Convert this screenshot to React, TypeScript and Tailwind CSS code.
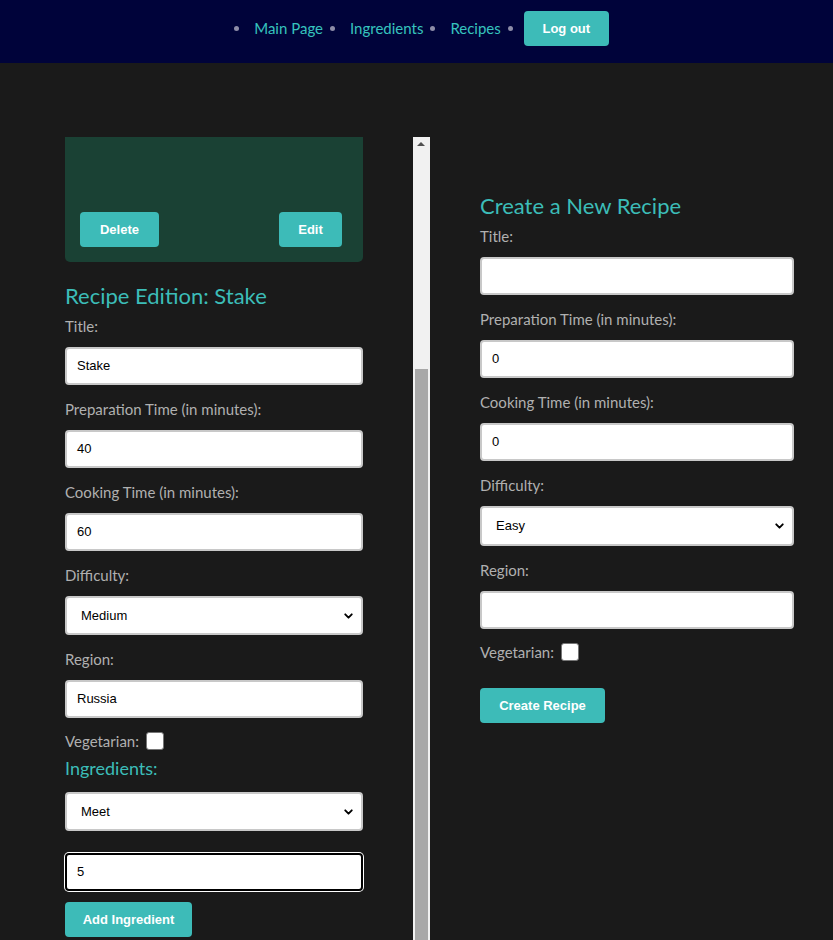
import React from "react";
import { ChevronDown } from "lucide-react";

const ui = { fontFamily: "Lato, 'Noto Sans', sans-serif" };
const arial = { fontFamily: "'Liberation Sans', Arial, sans-serif" };

const Label = ({ children }: { children: React.ReactNode }) => (
  <label className="block text-[15px] leading-[20px] text-[#b0b0b0] mb-[11px]" style={ui}>
    {children}
  </label>
);

const TextInput = ({ value, focused = false, last = false }: { value: string; focused?: boolean; last?: boolean }) => (
  <div
    className={`h-[38px] w-full bg-white rounded-[4px] flex items-center px-[10px] text-[13px] text-black ${
      focused ? "border-2 border-black ring-1 ring-white" : "border-2 border-[#c8c8c8]"
    } ${last ? "" : "mb-[14px]"}`}
    style={arial}
  >
    {value}
  </div>
);

const Select = ({ value, tall = false, last = false }: { value: string; tall?: boolean; last?: boolean }) => (
  <div
    className={`relative w-full bg-white rounded-[4px] border-2 border-[#c8c8c8] flex items-center pl-[14px] text-[13px] text-black ${
      tall ? "h-[40px]" : "h-[39px]"
    } ${last ? "" : "mb-[14px]"}`}
    style={arial}
  >
    {value}
    <ChevronDown className="absolute right-[6px] top-1/2 -translate-y-1/2 w-[13px] h-[13px]" strokeWidth={3.5} />
  </div>
);

const Checkbox = () => (
  <span className="inline-block w-[18px] h-[18px] bg-white rounded-[3px] border border-[#767676] ml-[7px]" />
);

const Button = ({ children, className = "" }: { children: React.ReactNode; className?: string }) => (
  <button
    className={`bg-[#3dbbb8] text-white font-bold text-[13px] rounded-[4px] h-[35px] ${className}`}
    style={arial}
  >
    {children}
  </button>
);

const Dot = ({ className = "mr-[15px]" }: { className?: string }) => (
  <span className={`w-[5px] h-[5px] rounded-full bg-[#8d8da8] ${className}`} />
);

export default function App() {
  return (
    <div className="min-h-[940px] bg-[#1a1a1a] overflow-hidden">
      <nav className="h-[63px] bg-[#00033a] flex justify-center pt-[11px] pl-[10px]">
        <ul className="flex items-center h-[35px] gap-[7px] text-[15px] text-[#36c3be]" style={ui}>
          <li className="flex items-center">
            <Dot />
            Main Page
          </li>
          <li className="flex items-center">
            <Dot />
            Ingredients
          </li>
          <li className="flex items-center">
            <Dot />
            Recipes
          </li>
          <li className="flex items-center">
            <Dot className="mr-[11px]" />
            <Button className="w-[85px]">Log out</Button>
          </li>
        </ul>
      </nav>

      <main className="flex pt-[74px] pl-[65px]">
        <section className="w-[298px]">
          <div className="h-[125px] bg-[#1a4134] rounded-b-[5px] flex items-end justify-between px-[15px] pb-[15px] pr-[21px]">
            <Button className="w-[79px]">Delete</Button>
            <Button className="w-[63px]">Edit</Button>
          </div>

          <h2 className="mt-[20px] mb-[6px] text-[22px] leading-[28px] text-[#3cbdb8]" style={ui}>
            Recipe Edition: Stake
          </h2>
          <Label>Title:</Label>
          <TextInput value="Stake" />
          <Label>Preparation Time (in minutes):</Label>
          <TextInput value="40" />
          <Label>Cooking Time (in minutes):</Label>
          <TextInput value="60" />
          <Label>Difficulty:</Label>
          <Select value="Medium" />
          <Label>Region:</Label>
          <TextInput value="Russia" last />
          <div className="mt-[13px] flex items-center text-[15px] leading-[20px] text-[#b0b0b0]" style={ui}>
            Vegetarian:
            <Checkbox />
          </div>
          <h3 className="mt-[5px] mb-[12px] text-[18px] leading-[24px] text-[#3cbdb8]" style={ui}>
            Ingredients:
          </h3>
          <Select value="Meet" last />
          <div className="mt-[22px]">
            <TextInput value="5" focused last />
          </div>
          <Button className="mt-[11px] w-[127px]">Add Ingredient</Button>
        </section>

        <div className="ml-[50px] w-[17px] h-[803px] bg-[#f1f1f1] relative shrink-0">
          <span className="absolute left-[4px] top-[5px] w-0 h-0 border-l-[4px] border-r-[4px] border-b-[4px] border-l-transparent border-r-transparent border-b-[#505050]" />
          <div className="absolute left-[2px] right-[2px] top-[232px] bottom-0 bg-[#a8a8a8]" />
        </div>

        <section className="ml-[50px] w-[314px] pt-[55px]">
          <h2 className="mb-[6px] text-[22px] leading-[28px] text-[#3cbdb8]" style={ui}>
            Create a New Recipe
          </h2>
          <Label>Title:</Label>
          <TextInput value="" />
          <Label>Preparation Time (in minutes):</Label>
          <TextInput value="0" />
          <Label>Cooking Time (in minutes):</Label>
          <TextInput value="0" />
          <Label>Difficulty:</Label>
          <Select value="Easy" tall />
          <Label>Region:</Label>
          <TextInput value="" last />
          <div className="mt-[13px] flex items-center text-[15px] leading-[20px] text-[#b0b0b0]" style={ui}>
            Vegetarian:
            <Checkbox />
          </div>
          <Button className="mt-[26px] w-[125px] h-[34px]">Create Recipe</Button>
        </section>
      </main>
    </div>
  );
}
